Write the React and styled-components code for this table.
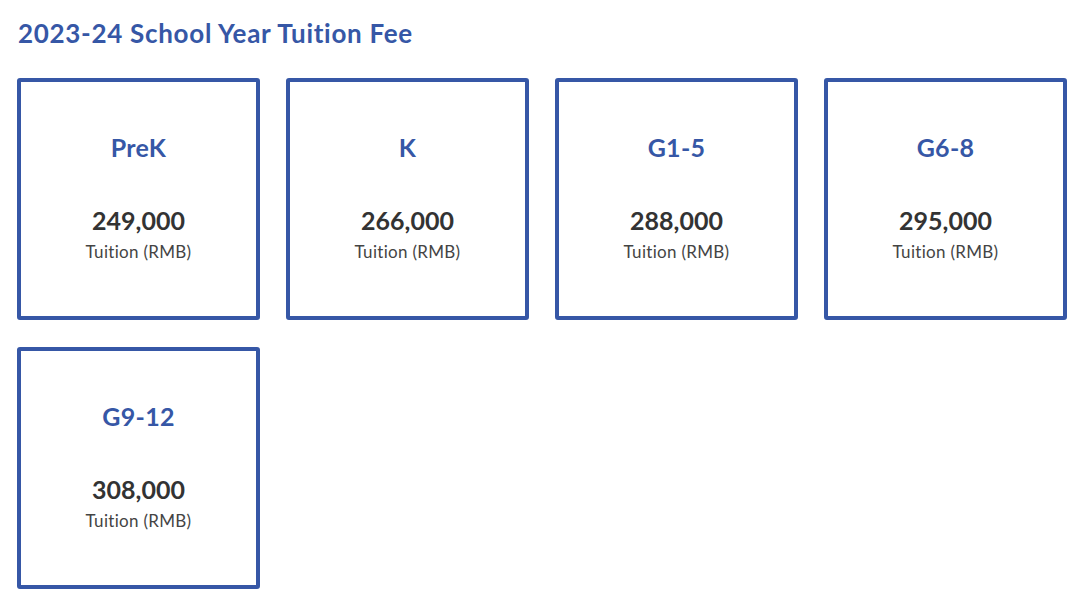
import React from 'react';
import styled, { createGlobalStyle } from 'styled-components';

const GlobalStyle = createGlobalStyle`
  body {
    margin: 0;
    background: #fff;
    font-family: Lato, "Open Sans", sans-serif;
  }
`;

const Page = styled.div`
  padding: 16px 13px 0 17px;
`;

const Title = styled.h1`
  margin: 0 0 28px 1px;
  font-size: 26px;
  line-height: 34px;
  font-weight: 700;
  letter-spacing: 0.7px;
  color: #3657a6;
`;

const Grid = styled.div`
  display: grid;
  grid-template-columns: repeat(4, 243px);
  column-gap: 26px;
  row-gap: 27px;
`;

const Card = styled.div`
  box-sizing: border-box;
  height: 242px;
  border: 4px solid #3657a6;
  border-radius: 3px;
  display: flex;
  flex-direction: column;
  align-items: center;
  padding-top: 50px;
`;

const Grade = styled.div`
  font-size: 25px;
  line-height: 30px;
  font-weight: 700;
  letter-spacing: 0.3px;
  color: #3657a6;
`;

const Price = styled.div`
  margin-top: 43px;
  font-size: 25px;
  line-height: 30px;
  font-weight: 700;
  color: #333;
`;

const Caption = styled.div`
  margin-top: 6px;
  font-size: 17px;
  line-height: 22px;
  letter-spacing: 0.3px;
  color: #444;
`;

const fees = [
  { grade: 'PreK', price: '249,000' },
  { grade: 'K', price: '266,000' },
  { grade: 'G1-5', price: '288,000' },
  { grade: 'G6-8', price: '295,000' },
  { grade: 'G9-12', price: '308,000' },
];

export default function App() {
  return (
    <Page>
      <GlobalStyle />
      <Title>2023-24 School Year Tuition Fee</Title>
      <Grid>
        {fees.map((f) => (
          <Card key={f.grade}>
            <Grade>{f.grade}</Grade>
            <Price>{f.price}</Price>
            <Caption>Tuition (RMB)</Caption>
          </Card>
        ))}
      </Grid>
    </Page>
  );
}
